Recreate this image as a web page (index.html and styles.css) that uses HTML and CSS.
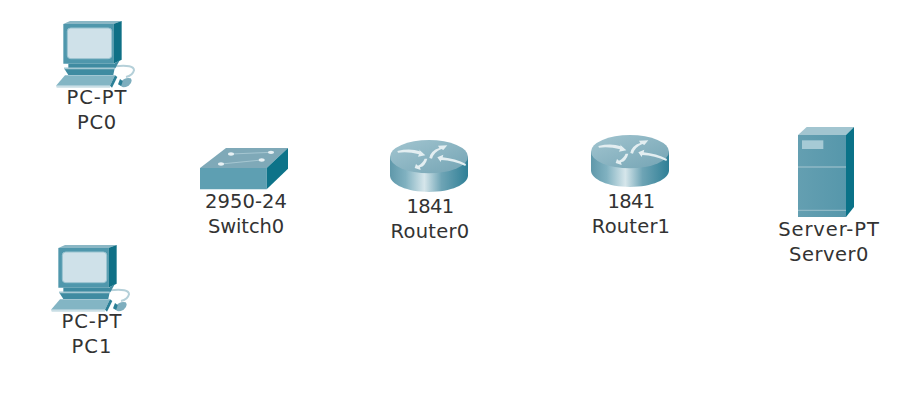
FILE: index.html
```html
<!DOCTYPE html>
<html lang="en">
<head>
<meta charset="utf-8">
<title>Network topology</title>
<link rel="stylesheet" href="styles.css">
</head>
<body>
<svg class="defs" width="0" height="0" aria-hidden="true">
  <defs>
    <linearGradient id="cyl" x1="0" y1="0" x2="1" y2="0">
      <stop offset="0" stop-color="#5f98aa"/>
      <stop offset="0.2" stop-color="#80b1c0"/>
      <stop offset="0.44" stop-color="#d6e6eb"/>
      <stop offset="0.66" stop-color="#6ea4b5"/>
      <stop offset="1" stop-color="#2f7f96"/>
    </linearGradient>
    <linearGradient id="dome" x1="0" y1="0" x2="1" y2="1">
      <stop offset="0" stop-color="#a2c5d0"/>
      <stop offset="1" stop-color="#74a4b4"/>
    </linearGradient>
    <linearGradient id="srv" x1="0" y1="0" x2="1" y2="0">
      <stop offset="0" stop-color="#649fb1"/>
      <stop offset="1" stop-color="#5697ab"/>
    </linearGradient>
    <symbol id="pc" viewBox="0 0 330 240">
      <path d="M225 166Q282 160 282 178Q278 194 258 198" fill="none" stroke="#b5d0d9" stroke-width="6"/>
      <path d="M70 39 90 30H245L220 39Z" fill="#8ab7c5"/>
      <path d="M220 39 245 30V146L220 158Z" fill="#0f7086"/>
      <path d="M70 39H220V158H70Z" fill="#4f97ac"/>
      <rect x="82" y="51" width="133" height="92" rx="10" fill="#cfe1e9" stroke="#9ac3d0" stroke-width="3"/>
      <path d="M85 158H222L240 146 226 172H85Z" fill="#3f8ba1"/>
      <path d="M72 172H224L220 192H85Z" fill="#3f8ba1"/>
      <path d="M72 172H224" stroke="#a6c9d4" stroke-width="5"/>
      <path d="M48 224 75 193H225L210 224Z" fill="#83b5c4"/>
      <path d="M48 224H210V230H50Z" fill="#c9dee5"/>
      <path d="M210 224 225 193 232 198 216 230Z" fill="#2b7f96"/>
      <path d="M244 212Q254 198 272 202Q280 212 266 224Q250 232 244 226Z" fill="#7eaebe"/>
      <path d="M244 226 234 220 240 204 248 210Z" fill="#2b7f96"/>
    </symbol>
    <symbol id="switch" viewBox="0 0 264 126">
      <path d="M0 60 78 0H264L200 60Z" fill="#7fa9b8"/>
      <path d="M0 60H200V124H0Z" fill="#5e9fb2"/>
      <path d="M200 60 264 0V62L200 124Z" fill="#0d7389"/>
      <path d="M93 18 213 13M63 48 185 36" fill="none" stroke="#a5c6d1" stroke-width="3"/>
      <ellipse cx="93" cy="18" rx="9" ry="5" fill="#e8f1f4"/>
      <ellipse cx="213" cy="13" rx="9" ry="5" fill="#e8f1f4"/>
      <ellipse cx="185" cy="36" rx="9" ry="5" fill="#e8f1f4"/>
      <ellipse cx="63" cy="48" rx="9" ry="5" fill="#e8f1f4"/>
    </symbol>
    <symbol id="router" viewBox="0 0 234 156">
      <path d="M0 50V106C0 134 52 156 117 156S234 134 234 106V50Z" fill="url(#cyl)"/>
      <ellipse cx="117" cy="50" rx="117" ry="50" fill="url(#dome)"/>
      <path d="M22 33Q60 24 90 34L86 28 106 46 84 50 87 43Q56 34 24 38Z" fill="#e3eef1"/>
      <path d="M118 54Q122 32 148 24L144 17 172 16 160 30 154 27Q132 36 126 56Z" fill="#e3eef1"/>
      <path d="M142 52 160 44 158 52Q196 56 228 72L226 78Q190 62 154 60L152 66Z" fill="#e3eef1"/>
      <path d="M112 56Q106 78 90 82L92 90 74 84 78 72 84 77Q98 70 104 56Z" fill="#e3eef1"/>
    </symbol>
    <symbol id="server" viewBox="0 0 168 270">
      <path d="M0 24 26 0H168L144 24Z" fill="#a2c5d0"/>
      <path d="M144 24 168 0V240L144 270Z" fill="#0a7288"/>
      <path d="M0 24H144V270H0Z" fill="url(#srv)"/>
      <rect x="12" y="40" width="64" height="26" fill="#a6cad5"/>
      <path d="M0 120H144" stroke="#8fb9c6" stroke-width="4"/>
      <path d="M0 250H144" stroke="#8fb9c6" stroke-width="4"/>
    </symbol>
  </defs>
</svg>
<main class="canvas">
  <figure class="node node-pc0">
    <svg class="icon icon-pc"><use href="#pc"/></svg>
    <figcaption class="label"><span class="ls-10">PC-PT</span><span class="ls-07">PC0</span></figcaption>
  </figure>
  <figure class="node node-pc1">
    <svg class="icon icon-pc"><use href="#pc"/></svg>
    <figcaption class="label"><span class="ls-10">PC-PT</span><span class="ls-10">PC1</span></figcaption>
  </figure>
  <figure class="node node-switch">
    <svg class="icon icon-switch"><use href="#switch"/></svg>
    <figcaption class="label"><span class="ls-01">2950-24</span><span class="ls-n01">Switch0</span></figcaption>
  </figure>
  <figure class="node node-router0">
    <svg class="icon icon-router"><use href="#router"/></svg>
    <figcaption class="label"><span class="ls-n06">1841</span><span class="ls-03">Router0</span></figcaption>
  </figure>
  <figure class="node node-router1">
    <svg class="icon icon-router"><use href="#router"/></svg>
    <figcaption class="label"><span class="ls-n06">1841</span><span class="ls-02">Router1</span></figcaption>
  </figure>
  <figure class="node node-server">
    <svg class="icon icon-server"><use href="#server"/></svg>
    <figcaption class="label"><span class="ls-09">Server-PT</span><span class="ls-05">Server0</span></figcaption>
  </figure>
</main>
</body>
</html>
```
FILE: styles.css
```css
html, body {
  margin: 0;
  padding: 0;
  background: #fff;
}
body {
  overflow: hidden;
}
.defs {
  position: absolute;
}
.canvas {
  position: relative;
  width: 915px;
  height: 403px;
  overflow: hidden;
  font-family: "DejaVu Sans", Verdana, sans-serif;
  font-size: 19.5px;
  color: #333;
}
.node {
  position: absolute;
  margin: 0;
  width: 120px;
  display: flex;
  flex-direction: column;
  align-items: center;
}
.node-pc0 { left: 37px; top: 11px; }
.node-pc1 { left: 32px; top: 235px; }
.node-switch { left: 186px; top: 148px; }
.node-router0 { left: 370px; top: 140px; }
.node-router1 { left: 571px; top: 135px; }
.node-server { left: 769px; top: 127px; }
.icon { display: block; flex: none; filter: blur(0.5px); }
.icon-pc { width: 110px; height: 80px; margin-right: 4px; }
.icon-switch { width: 88px; height: 42px; margin-right: 4px; }
.icon-router { width: 78px; height: 52px; margin-right: 3px; }
.icon-server { width: 56px; height: 90px; margin-right: 6px; }
.label {
  display: flex;
  flex-direction: column;
  align-items: center;
  white-space: nowrap;
  line-height: 24.5px;
}
.icon-pc + .label { margin-top: -5px; }
.icon-switch + .label { margin-top: 0; }
.icon-router + .label { margin-top: 3px; }
.icon-server + .label { margin-top: 1px; }
.ls-n06 { letter-spacing: -0.6px; }
.ls-n01 { letter-spacing: -0.1px; }
.ls-01 { letter-spacing: 0.1px; }
.ls-02 { letter-spacing: 0.2px; }
.ls-03 { letter-spacing: 0.3px; }
.ls-05 { letter-spacing: 0.5px; }
.ls-07 { letter-spacing: 0.7px; }
.ls-09 { letter-spacing: 0.9px; }
.ls-10 { letter-spacing: 1px; }
```
